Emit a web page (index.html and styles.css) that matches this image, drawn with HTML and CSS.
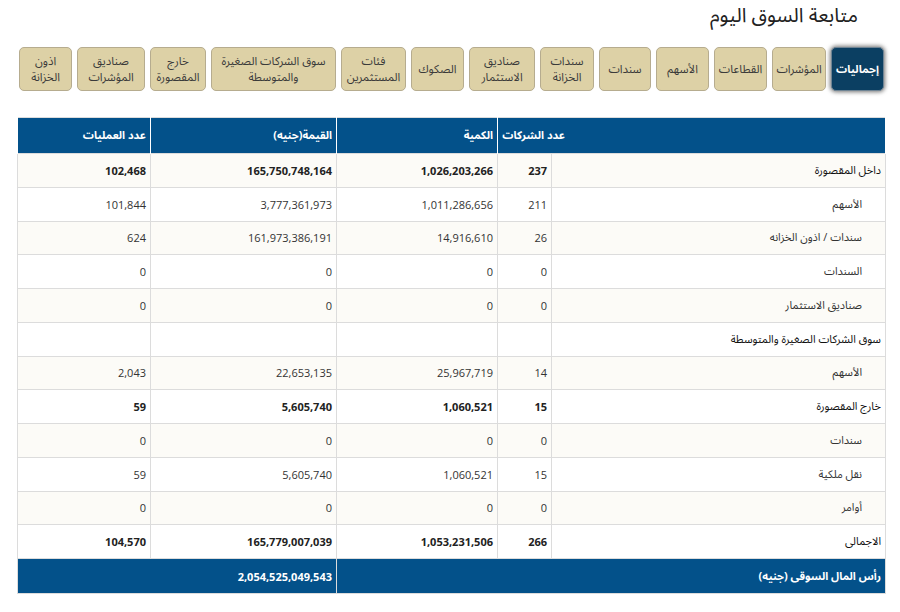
FILE: index.html
```html
<!DOCTYPE html>
<html lang="ar" dir="rtl">
<head>
<meta charset="utf-8">
<title>متابعة السوق اليوم</title>
<link rel="stylesheet" href="styles.css">
</head>
<body>
<div class="page">
  <h1 class="title">متابعة السوق اليوم</h1>
  <nav class="tabs">
    <a class="tab active">إجماليات</a>
    <a class="tab w54">المؤشرات</a>
    <a class="tab">القطاعات</a>
    <a class="tab">الأسهم</a>
    <a class="tab w52">سندات</a>
    <a class="tab w54">سندات<br>الخزانة</a>
    <a class="tab w66">صناديق<br>الاستثمار</a>
    <a class="tab">الصكوك</a>
    <a class="tab w65">فئات<br>المستثمرين</a>
    <a class="tab w125">سوق الشركات الصغيرة<br>والمتوسطة</a>
    <a class="tab w56">خارج<br>المقصورة</a>
    <a class="tab w68">صناديق<br>المؤشرات</a>
    <a class="tab">اذون<br>الخزانة</a>
  </nav>
  <table class="market">
    <colgroup>
      <col class="c-label"><col class="c-count"><col class="c-qty"><col class="c-value"><col class="c-ops">
    </colgroup>
    <thead>
      <tr>
        <th colspan="2"><span class="h-count">عدد الشركات</span></th>
        <th>الكمية</th>
        <th>القيمة(جنيه)</th>
        <th>عدد العمليات</th>
      </tr>
    </thead>
    <tbody>
      <tr class="main"><td>داخل المقصورة</td><td>237</td><td>1,026,203,266</td><td>165,750,748,164</td><td>102,468</td></tr>
      <tr class="sub"><td>الأسهم</td><td>211</td><td>1,011,286,656</td><td>3,777,361,973</td><td>101,844</td></tr>
      <tr class="sub"><td>سندات / اذون الخزانه</td><td>26</td><td>14,916,610</td><td>161,973,386,191</td><td>624</td></tr>
      <tr class="sub"><td>السندات</td><td>0</td><td>0</td><td>0</td><td>0</td></tr>
      <tr class="sub"><td>صناديق الاستثمار</td><td>0</td><td>0</td><td>0</td><td>0</td></tr>
      <tr class="main"><td>سوق الشركات الصغيرة والمتوسطة</td><td></td><td></td><td></td><td></td></tr>
      <tr class="sub"><td>الأسهم</td><td>14</td><td>25,967,719</td><td>22,653,135</td><td>2,043</td></tr>
      <tr class="main"><td>خارج المقصورة</td><td>15</td><td>1,060,521</td><td>5,605,740</td><td>59</td></tr>
      <tr class="sub"><td>سندات</td><td>0</td><td>0</td><td>0</td><td>0</td></tr>
      <tr class="sub"><td>نقل ملكية</td><td>15</td><td>1,060,521</td><td>5,605,740</td><td>59</td></tr>
      <tr class="sub"><td>أوامر</td><td>0</td><td>0</td><td>0</td><td>0</td></tr>
      <tr class="main"><td>الاجمالى</td><td>266</td><td>1,053,231,506</td><td>165,779,007,039</td><td>104,570</td></tr>
    </tbody>
    <tfoot>
      <tr><td colspan="3">رأس المال السوقى (جنيه)</td><td colspan="2">2,054,525,049,543</td></tr>
    </tfoot>
  </table>
</div>
</body>
</html>
```
FILE: styles.css
```css
html, body {
  margin: 0;
  padding: 0;
  background: #fff;
}
body {
  font-family: "Open Sans", "Noto Sans Arabic", "DejaVu Sans", sans-serif;
  color: #222;
}
.page {
  direction: rtl;
  padding: 0 14px 0 18px;
}
.title {
  margin: 0 28px 0 0;
  padding-top: 2px;
  font-size: 20px;
  line-height: 26px;
  font-weight: normal;
  color: #222;
}
.tabs {
  display: flex;
  gap: 5px;
  margin-top: 19px;
  padding-right: 2px;
}
.tab {
  box-sizing: border-box;
  flex: none;
  width: 53px;
  height: 44px;
  padding: 0 2px;
  display: flex;
  align-items: center;
  justify-content: center;
  text-align: center;
  background: #ddd1a6;
  border: 1px solid #b6ac8f;
  border-radius: 5px;
  font-size: 11.5px;
  line-height: 16px;
  color: #3a3a3a;
  white-space: nowrap;
}
.tab.w52 { width: 52px; }
.tab.w54 { width: 54px; }
.tab.w56 { width: 56px; }
.tab.w65 { width: 65px; }
.tab.w66 { width: 66px; }
.tab.w68 { width: 68px; }
.tab.w125 { width: 125px; }
.tab.active {
  background: #0b3f62;
  color: #fff;
  font-weight: bold;
  font-size: 11px;
  border-color: #6f8494;
  box-shadow: 0 0 4px 1px rgba(0,0,0,0.55);
}
.market {
  width: 868px;
  margin-top: 26px;
  border-collapse: collapse;
  table-layout: fixed;
  font-size: 11px;
  border: 1px solid #dcdcdc;
}
.c-label { width: 334px; }
.c-count { width: 54px; }
.c-qty { width: 161px; }
.c-value { width: 186px; }
.c-ops { width: 133px; }
.market th {
  height: 35px;
  padding: 0 4px;
  background: #03518a;
  color: #fff;
  font-weight: bold;
  text-align: right;
  border-left: 1px solid #fff;
  border-right: 1px solid #fff;
}
.h-count {
  padding-right: 316px;
}
.market td {
  height: 32.75px;
  padding: 0 4px;
  text-align: right;
  border: 1px solid #dcdcdc;
  color: #333;
}
.market tbody tr:nth-child(odd) td {
  background: #fcfbf7;
}
.market tr.main td {
  font-weight: bold;
  color: #222;
}
.market tr.main td:first-child {
  font-weight: normal;
  color: #111;
}
.market tr.sub td:first-child {
  padding-right: 23px;
}
.market tfoot td {
  height: 34px;
  background: #03518a;
  color: #fff;
  font-weight: bold;
  border-color: #dcdcdc;
}
```
